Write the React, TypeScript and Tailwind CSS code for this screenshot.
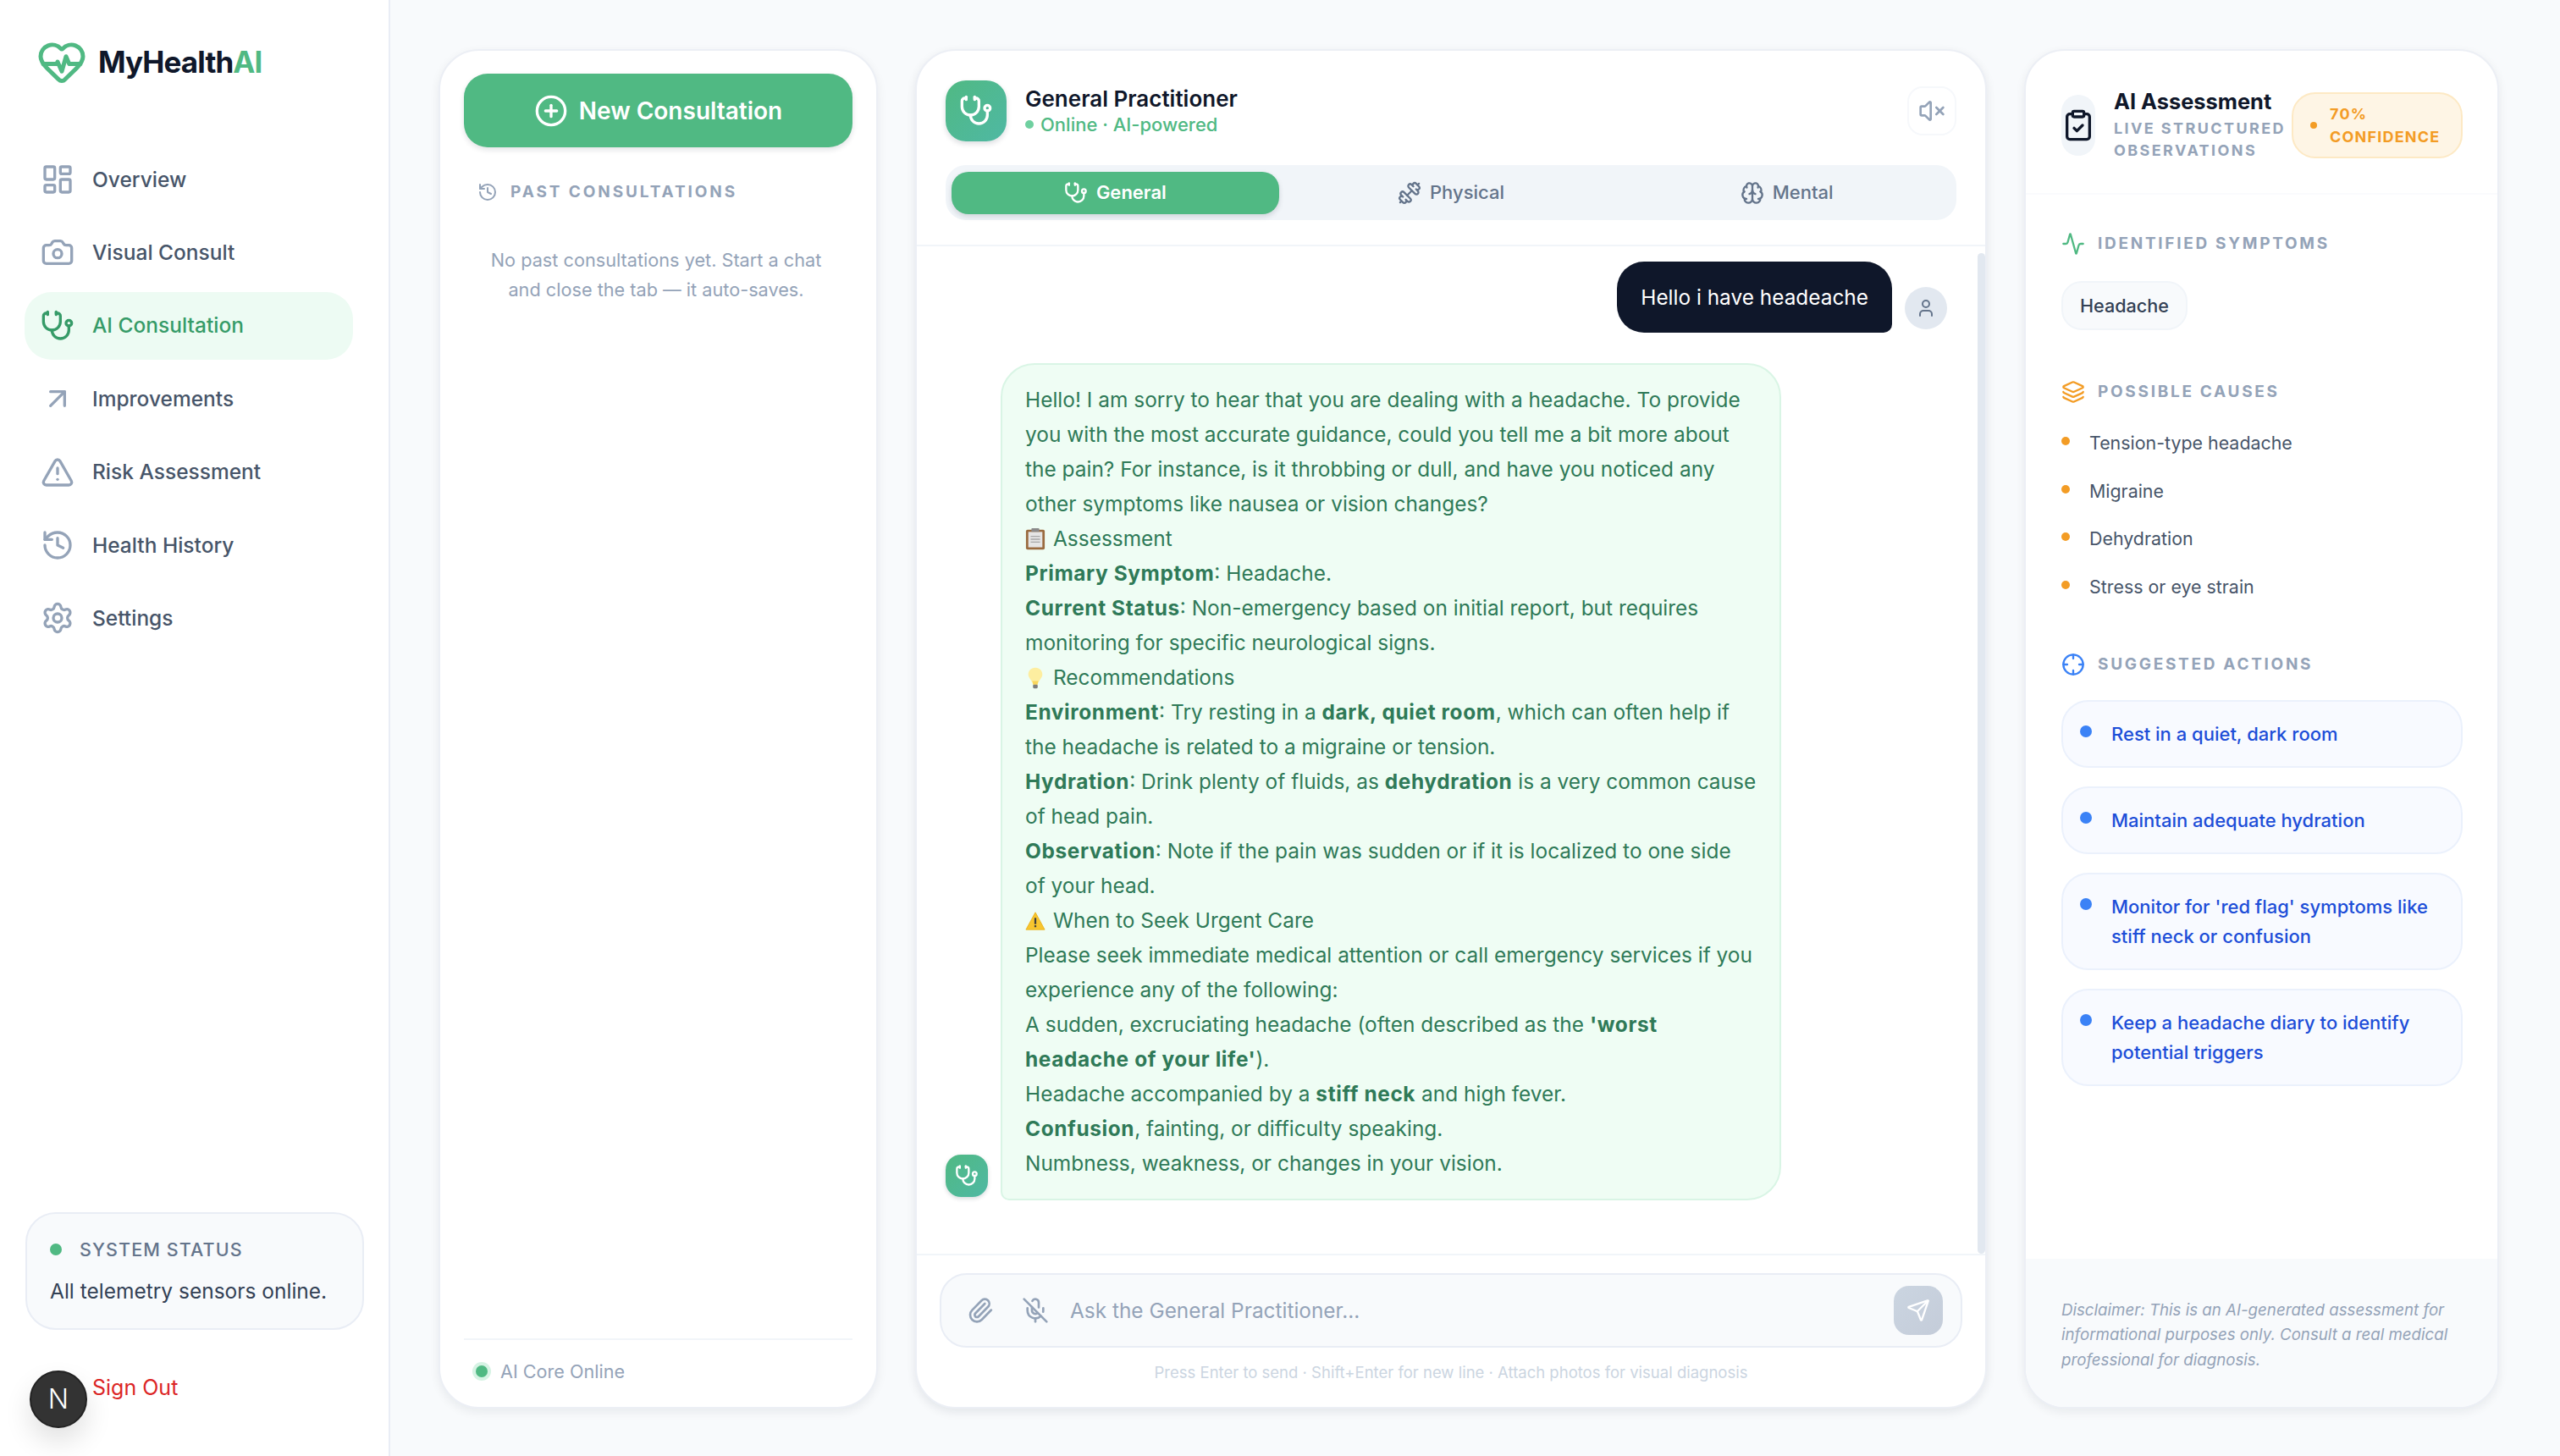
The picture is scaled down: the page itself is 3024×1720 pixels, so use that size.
import {
  Activity,
  ArrowUpRight,
  Brain,
  Camera,
  CirclePlus,
  ClipboardCheck,
  Crosshair,
  Dumbbell,
  HeartPulse,
  History,
  Layers,
  LayoutDashboard,
  MicOff,
  Paperclip,
  Send,
  Settings,
  Stethoscope,
  TriangleAlert,
  User,
  VolumeX,
} from "lucide-react";

const navItems = [
  { label: "Overview", icon: LayoutDashboard },
  { label: "Visual Consult", icon: Camera },
  { label: "AI Consultation", icon: Stethoscope, active: true },
  { label: "Improvements", icon: ArrowUpRight },
  { label: "Risk Assessment", icon: TriangleAlert },
  { label: "Health History", icon: History },
  { label: "Settings", icon: Settings },
];

const causes = [
  "Tension-type headache",
  "Migraine",
  "Dehydration",
  "Stress or eye strain",
];

const actions = [
  "Rest in a quiet, dark room",
  "Maintain adequate hydration",
  "Monitor for 'red flag' symptoms like stiff neck or confusion",
  "Keep a headache diary to identify potential triggers",
];

function ClipboardEmoji() {
  return (
    <svg viewBox="0 0 26 30" preserveAspectRatio="none" className="inline-block w-[24px] h-[26px] mr-[9px] align-[-5px]">
      <rect x="1" y="2" width="24" height="27" rx="2" fill="#9a6b3f" />
      <rect x="4" y="5" width="18" height="21" fill="#e5e5e5" />
      <rect x="8" y="0" width="10" height="5" rx="1" fill="#8a8a8a" />
      <path d="M7 11h12M7 15h12M7 19h12" stroke="#a8a8a8" strokeWidth="1.5" />
    </svg>
  );
}

function BulbEmoji() {
  return (
    <svg viewBox="0 0 26 30" preserveAspectRatio="none" className="inline-block w-[24px] h-[26px] mr-[9px] align-[-5px]">
      <path d="M13 1C7 1 4 6 4 10c0 5 5 8 6 14h6c1-6 6-9 6-14 0-4-3-9-9-9Z" fill="#fdeea0" />
      <path d="M9 19c1 2 1 3 1 5h6c0-2 0-3 1-5Z" fill="#f9d65c" />
      <rect x="10" y="24" width="6" height="5" rx="1.5" fill="#7d7d7d" />
    </svg>
  );
}

function WarningEmoji() {
  return (
    <svg viewBox="0 0 26 26" className="inline-block w-[24px] h-[24px] mr-[9px] align-[-4px]">
      <path d="M13 2 25 24H1Z" fill="#f7c52e" stroke="#eab320" strokeLinejoin="round" />
      <rect x="11.8" y="9" width="2.4" height="8" fill="#3d3d3d" />
      <rect x="11.8" y="18.5" width="2.4" height="2.4" fill="#3d3d3d" />
    </svg>
  );
}

function Sidebar() {
  return (
    <aside className="w-[461px] h-full shrink-0 bg-white border-r-2 border-[#e9edf5] flex flex-col">
      <div className="flex items-center pl-[43px] pt-[41px] h-[105px]">
        <HeartPulse className="w-[60px] h-[60px] text-[#50b983]" />
        <span className="ml-[13px] text-[35px] font-bold tracking-[-0.9px] text-[#0f172a]">
          MyHealth<span className="text-[#50b983]">AI</span>
        </span>
      </div>
      <nav className="mt-[67px] ml-[29px] w-[388px] flex flex-col gap-[6.4px]">
        {navItems.map((item) => (
          <div
            key={item.label}
            className={`h-[80px] flex items-center gap-[21px] pl-[19px] rounded-[32px] text-[24.5px] font-medium ${
              item.active ? "bg-[#edfbf3] text-[#369b68]" : "text-[#475569]"
            }`}
          >
            <item.icon
              className={`w-[40px] h-[40px] shrink-0 ${
                item.active ? "text-[#369b68]" : "text-[#94a3b8]"
              }`}
            />
            {item.label}
          </div>
        ))}
      </nav>
      <div className="flex-1" />
      <div className="ml-[30px] w-[400px] h-[139px] rounded-[36px] bg-[#f8fafc] border-2 border-[#e9edf5] pl-[27px] pt-[26px]">
        <div className="flex items-center gap-[21px] h-[32px]">
          <span className="w-[14px] h-[14px] rounded-full bg-[#50b983]" />
          <span className="text-[21.5px] font-medium tracking-[1.1px] text-[#64748b]">SYSTEM STATUS</span>
        </div>
        <p className="mt-[15px] text-[24.5px] text-[#334155]">All telemetry sensors online.</p>
      </div>
      <a className="mt-[48px] mb-[61px] ml-[109px] h-[40px] leading-[40px] text-[25px] text-[#dc2626]">Sign Out</a>
    </aside>
  );
}

function HistoryPanel() {
  return (
    <section className="w-[519px] h-full shrink-0 bg-white rounded-[48px] border-2 border-[#eceff5] shadow-[0_4px_12px_rgba(15,23,42,0.07)] flex flex-col px-[28px] pt-[27px]">
      <button className="h-[87px] w-full rounded-[28px] bg-[#50b983] shadow-[0_3px_6px_rgba(15,23,42,0.12)] text-white text-[28px] font-semibold flex items-center justify-center gap-[13px]">
        <CirclePlus className="w-[40px] h-[40px]" />
        New Consultation
      </button>
      <div className="mt-[41px] ml-[16px] h-[24px] flex items-center gap-[15px] text-[#94a3b8]">
        <History className="w-[24px] h-[24px]" />
        <span className="text-[19px] font-bold tracking-[2.9px]">PAST CONSULTATIONS</span>
      </div>
      <p className="mt-[51px] ml-[17px] w-[420px] text-center text-[21.7px] leading-[35px] text-[#94a3b8]">
        No past consultations yet. Start a chat and close the tab — it auto-saves.
      </p>
      <div className="flex-1" />
      <div className="h-[81px] border-t-2 border-[#f1f5f9] flex items-center pl-[14px] pb-[5px] gap-[15px]">
        <span className="w-[14px] h-[14px] rounded-full bg-[#50b983] ring-4 ring-[#d6f3e4]" />
        <span className="text-[21.6px] text-[#94a3b8]">AI Core Online</span>
      </div>
    </section>
  );
}

function ChatPanel() {
  return (
    <section className="w-[1266px] h-full shrink-0 bg-white rounded-[48px] border-2 border-[#eceff5] shadow-[0_4px_12px_rgba(15,23,42,0.09)] flex flex-col overflow-hidden">
      <header className="h-[231px] shrink-0 border-b-2 border-[#f1f5f9] pt-[35px] px-[34px]">
        <div className="flex items-center">
          <div className="w-[72px] h-[72px] rounded-[24px] bg-gradient-to-br from-[#50b983] to-[#4fb8a3] shadow-[0_3px_6px_rgba(15,23,42,0.14)] flex items-center justify-center text-white">
            <Stethoscope className="w-[40px] h-[40px]" />
          </div>
          <div className="ml-[22px] flex-1 mb-[3px]">
            <div className="text-[26px] leading-[35px] font-semibold text-[#0f172a]">General Practitioner</div>
            <div className="flex items-center gap-[8px] text-[22px] leading-[26px] font-medium text-[#50b983]">
              <span className="w-[10px] h-[10px] rounded-full bg-[#6fd0a0]" />
              Online · AI-powered
            </div>
          </div>
          <div className="w-[58px] h-[58px] rounded-[18px] border-2 border-[#f6f8fb] flex items-center justify-center text-[#94a3b8]">
            <VolumeX className="w-[32px] h-[32px]" />
          </div>
        </div>
        <div className="mt-[28px] h-[65px] rounded-[24px] bg-[#f1f5f9] flex items-center gap-[10px] px-[7px]">
          <div className="flex-1 h-[50px] rounded-[20px] bg-[#50b983] shadow-[0_3px_6px_rgba(15,23,42,0.14)] text-white text-[22px] font-semibold flex items-center justify-center gap-[10px]">
            <Stethoscope className="w-[28px] h-[28px]" />
            General
          </div>
          <div className="flex-1 h-[50px] text-[#64748b] text-[22px] font-medium flex items-center justify-center gap-[10px]">
            <Dumbbell className="w-[28px] h-[28px]" />
            Physical
          </div>
          <div className="flex-1 h-[50px] text-[#64748b] text-[22px] font-medium flex items-center justify-center gap-[10px]">
            <Brain className="w-[28px] h-[28px]" />
            Mental
          </div>
        </div>
      </header>

      <div className="relative flex-1 pl-[34px] pr-[45px] pt-[18px]">
        <div className="absolute right-0 top-[8px] bottom-0 w-[9px] rounded-full bg-[#e2e8f0]" />
        <div className="flex justify-end items-end gap-[15px]">
          <div className="h-[84px] rounded-[32px] rounded-br-[10px] bg-[#0f172a] px-[28px] flex items-center text-white text-[24.4px]">
            Hello i have headeache
          </div>
          <div className="w-[50px] h-[50px] mb-[4px] rounded-full bg-[#e2e8f0] flex items-center justify-center text-[#64748b]">
            <User className="w-[24px] h-[24px]" />
          </div>
        </div>
        <div className="mt-[36px] flex items-end gap-[15px]">
          <div className="w-[50px] h-[50px] mb-[4px] rounded-[18px] bg-gradient-to-br from-[#50b983] to-[#4fb8a3] shadow-[0_2px_5px_rgba(15,23,42,0.16)] flex items-center justify-center text-white">
            <Stethoscope className="w-[28px] h-[28px]" />
          </div>
          <div className="w-[922px] rounded-[40px] rounded-bl-[10px] bg-[#effdf4] border-2 border-[#d9f5e5] px-[27px] pt-[21px] pb-[21px] text-[24.45px] leading-[41px] text-[#2f7a58]">
            <p>Hello! I am sorry to hear that you are dealing with a headache. To provide you with the most accurate guidance, could you tell me a bit more about the pain? For instance, is it throbbing or dull, and have you noticed any other symptoms like nausea or vision changes?</p>
            <p><ClipboardEmoji />Assessment</p>
            <p><b className="font-bold tracking-[0.6px]">Primary Symptom</b>: Headache.</p>
            <p><b className="font-bold tracking-[0.6px]">Current Status</b>: Non-emergency based on initial report, but requires monitoring for specific neurological signs.</p>
            <p><BulbEmoji />Recommendations</p>
            <p><b className="font-bold tracking-[0.6px]">Environment</b>: Try resting in a <b className="font-bold tracking-[0.6px]">dark, quiet room</b>, which can often help if<br />the headache is related to a migraine or tension.</p>
            <p><b className="font-bold tracking-[0.6px]">Hydration</b>: Drink plenty of fluids, as <b className="font-bold tracking-[0.6px]">dehydration</b> is a very common cause of head pain.</p>
            <p><b className="font-bold tracking-[0.6px]">Observation</b>: Note if the pain was sudden or if it is localized to one side<br />of your head.</p>
            <p><WarningEmoji />When to Seek Urgent Care</p>
            <p>Please seek immediate medical attention or call emergency services if you experience any of the following:</p>
            <p>A sudden, excruciating headache (often described as the <b className="font-bold tracking-[0.6px]">'worst headache of your life'</b>).</p>
            <p>Headache accompanied by a <b className="font-bold tracking-[0.6px]">stiff neck</b> and high fever.</p>
            <p><b className="font-bold tracking-[0.6px]">Confusion</b>, fainting, or difficulty speaking.</p>
            <p>Numbness, weakness, or changes in your vision.</p>
          </div>
        </div>
      </div>

      <div className="h-[181px] shrink-0 border-t-2 border-[#f1f5f9] px-[27px] pt-[21px]">
        <div className="h-[88px] rounded-[32px] bg-[#f8fafc] border-2 border-[#e9edf5] flex items-center pl-[30px] pr-[21px] text-[#94a3b8]">
          <Paperclip className="w-[32px] h-[32px]" />
          <MicOff className="w-[32px] h-[32px] ml-[33px]" />
          <span className="ml-[25px] flex-1 text-[24.4px]">Ask the General Practitioner...</span>
          <div className="w-[58px] h-[58px] rounded-[18px] bg-gradient-to-br from-[#cbd5e1] to-[#c4ccd9] flex items-center justify-center text-white">
            <Send className="w-[28px] h-[28px]" />
          </div>
        </div>
        <p className="mt-[16px] text-center text-[18.5px] leading-[26px] text-[#cbd5e1]">
          Press Enter to send · Shift+Enter for new line · Attach photos for visual diagnosis
        </p>
      </div>
    </section>
  );
}

function SectionTitle({ icon: Icon, color, title }: { icon: typeof Activity; color: string; title: string }) {
  return (
    <div className="h-[28px] flex items-center gap-[15px]">
      <Icon className={`w-[28px] h-[28px] ${color}`} />
      <span className="text-[19px] font-bold tracking-[2.7px] text-[#94a3b8]">{title}</span>
    </div>
  );
}

function AssessmentPanel() {
  return (
    <section className="w-[561px] h-full shrink-0 bg-white rounded-[48px] border-2 border-[#eceff5] shadow-[0_4px_12px_rgba(15,23,42,0.07)] flex flex-col overflow-hidden">
      <header className="h-[170px] shrink-0 border-b-2 border-[#fafbfd] pl-[42px] pr-[41px] pt-[8px] flex items-center">
        <div className="w-[40px] h-[72px] rounded-[20px] bg-[#f1f5f9] flex items-center justify-center text-[#0f172a] shrink-0">
          <ClipboardCheck className="w-[40px] h-[40px]" />
        </div>
        <div className="ml-[22px] w-[209px] shrink-0">
          <div className="text-[25.4px] leading-[30px] font-bold text-[#0f172a]">AI Assessment</div>
          <div className="mt-[4px] text-[18px] leading-[26px] font-bold tracking-[2.4px] text-[#94a3b8]">LIVE STRUCTURED OBSERVATIONS</div>
        </div>
        <div className="ml-auto w-[202px] h-[78px] rounded-[28px] bg-[#fef5e5] border-2 border-[#fde9c4] flex items-center pl-[20px] gap-[15px] text-[#f39c25]">
          <span className="w-[8px] h-[8px] rounded-full bg-[#f39c25] shrink-0" />
          <span className="text-[18px] leading-[27px] font-bold tracking-[1.2px]">70%<br />CONFIDENCE</span>
        </div>
      </header>

      <div className="pl-[42px] pr-[41px]">
        <div className="mt-[44px]">
          <SectionTitle icon={Activity} color="text-[#50b983]" title="IDENTIFIED SYMPTOMS" />
        </div>
        <div className="mt-[30px] w-[149px] h-[58px] rounded-[24px] bg-[#f8fafc] border-2 border-[#f1f5f9] flex items-center justify-center text-[21.6px] font-medium text-[#334155]">
          Headache
        </div>
        <div className="mt-[59px]">
          <SectionTitle icon={Layers} color="text-[#f39c25]" title="POSSIBLE CAUSES" />
        </div>
        <ul className="mt-[28px] flex flex-col gap-[20.7px]">
          {causes.map((c) => (
            <li key={c} className="h-[36px] flex items-center gap-[23px] text-[21.4px] text-[#475569]">
              <span className="w-[10px] h-[10px] mb-[4px] rounded-full bg-[#f39c25]" />
              {c}
            </li>
          ))}
        </ul>
        <div className="mt-[60px]">
          <SectionTitle icon={Crosshair} color="text-[#3b82f6]" title="SUGGESTED ACTIONS" />
        </div>
        <div className="mt-[28px] flex flex-col gap-[22px]">
          {actions.map((a) => (
            <div key={a} className="rounded-[32px] bg-[#f8faff] border-2 border-[#ebf1fc] pl-[20px] pr-[30px] py-[20.5px] flex items-start gap-[23px]">
              <span className="w-[14px] h-[14px] mt-[7px] rounded-full bg-[#3b82f6] shrink-0" />
              <span className="text-[22px] leading-[35px] font-medium text-[#1d4ed8]">{a}</span>
            </div>
          ))}
        </div>
      </div>

      <footer className="mt-auto h-[175px] bg-[#f8fafc] pl-[42px] pr-[41px] pt-[46px]">
        <p className="text-[18.7px] leading-[29.3px] italic text-[#94a3b8]">
          Disclaimer: This is an AI-generated assessment for informational purposes only. Consult a real medical professional for diagnosis.
        </p>
      </footer>
    </section>
  );
}

export default function App() {
  return (
    <div className="relative w-[3024px] h-[1720px] flex bg-[#f8fafc] overflow-hidden [font-family:Inter,sans-serif]">
      <Sidebar />
      <main className="flex-1 h-full pt-[58px] pb-[56px] pl-[57px] flex gap-[44px]">
        <HistoryPanel />
        <ChatPanel />
        <AssessmentPanel />
      </main>
      <div className="absolute left-[35px] top-[1619px] w-[68px] h-[68px] rounded-full bg-[#333] border-2 border-[#222] shadow-[0_16px_32px_rgba(0,0,0,0.12)] flex items-center justify-center text-white text-[32px] font-light">
        N
      </div>
    </div>
  );
}
